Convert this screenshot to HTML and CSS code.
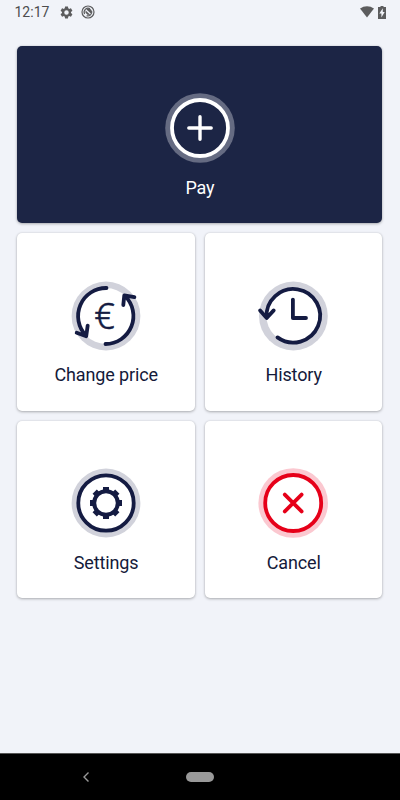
FILE: index.html
```html
<!DOCTYPE html>
<html lang="en">
<head>
<meta charset="utf-8">
<title>Pay</title>
<link rel="stylesheet" href="styles.css">
</head>
<body>
<div class="screen">
  <header class="status">
    <span class="time">12:17</span>
    <svg class="gear" viewBox="0 0 24 24"><path d="M19.14 12.94c.04-.3.06-.61.06-.94s-.02-.64-.07-.94l2.03-1.58c.18-.14.23-.41.12-.61l-1.92-3.32c-.12-.22-.37-.29-.59-.22l-2.39.96c-.5-.38-1.03-.7-1.62-.94l-.36-2.54c-.04-.24-.24-.41-.48-.41h-3.84c-.24 0-.43.17-.47.41l-.36 2.54c-.59.24-1.13.57-1.62.94l-2.39-.96c-.22-.08-.47 0-.59.22L2.74 8.87c-.12.21-.08.47.12.61l2.03 1.58c-.05.3-.09.63-.09.94s.02.64.07.94l-2.03 1.58c-.18.14-.23.41-.12.61l1.92 3.32c.12.22.37.29.59.22l2.39-.96c.5.38 1.03.7 1.62.94l.36 2.54c.05.24.24.41.48.41h3.84c.24 0 .44-.17.47-.41l.36-2.54c.59-.24 1.13-.56 1.62-.94l2.39.96c.22.08.47 0 .59-.22l1.92-3.32c.12-.22.07-.47-.12-.61zM12 15.6a3.6 3.6 0 1 1 0-7.2 3.6 3.6 0 0 1 0 7.2z"/></svg>
    <svg class="target" viewBox="0 0 14 14"><circle class="thin" cx="7" cy="7" r="6"/><path class="thin" d="M3.6 9A4 4 0 0 1 9 3.6M10.7 6A4 4 0 0 1 5.5 10.7"/><path d="M4.6 5.6 9.6 10 6.4 9.8 4.4 7.6zM5.4 4.6a3 3 0 0 1 4.5 4z"/></svg>
    <svg class="wifi" viewBox="0 0 14 12"><path d="M0 2.6C4-.7 10-.7 14 2.6L7 11.5z"/></svg>
    <svg class="battery" viewBox="0 0 8 13"><path d="M2.5 0h3v1H8v12H0V1h2.5z"/><path class="bolt" d="M4.8 2.2 1.3 7.4h2.1v4.2l3.3-5.5H4.8z"/></svg>
  </header>
  <main class="grid">
    <section class="card pay">
      <svg class="icon" viewBox="-36 -36 72 72"><circle class="halo" r="34.8"/><circle class="disc" r="28"/><circle class="line" r="28"/><path class="line plus" d="M0-11.2V11.2M-11.2 0H11.2"/></svg>
      <span>Pay</span>
    </section>
    <section class="card">
      <svg class="icon" viewBox="-36 -36 72 72"><circle class="halo" r="34.4"/><circle class="disc" r="28"/><path class="line" d="M.5-28A28 28 0 0 0-20 19.5M-29.3 16.8-19.8 20.2-18.3 9.6M-.5 28A28 28 0 0 0 19-20M17.3-11 18.3-20.7 28.4-18.9"/><text class="euro" x="-1.6" y="12.6">€</text></svg>
      <span>Change price</span>
    </section>
    <section class="card">
      <svg class="icon" viewBox="-35.4 -36 72 72"><circle class="halo" r="34.4"/><circle class="disc" r="27"/><path class="line" d="M-15.9 21.4A26.8 26.8 0 1 0-26.8 1.8M-33.3-5.6-26.7 2-19.7-5.6M-.5-16.4V2H12.6"/></svg>
      <span>History</span>
    </section>
    <section class="card">
      <svg class="icon" viewBox="-36 -36 72 72"><circle class="halo" r="34.4"/><circle class="disc" r="28"/><circle class="line" r="27.7"/><circle class="cog" r="11.8"/>
        <g class="teeth"><path id="tooth" d="M-3-16H3V-11H-3z"/><use href="#tooth" transform="rotate(45)"/><use href="#tooth" transform="rotate(90)"/><use href="#tooth" transform="rotate(135)"/><use href="#tooth" transform="rotate(180)"/><use href="#tooth" transform="rotate(225)"/><use href="#tooth" transform="rotate(270)"/><use href="#tooth" transform="rotate(315)"/></g></svg>
      <span>Settings</span>
    </section>
    <section class="card cancel">
      <svg class="icon" viewBox="-35.2 -36 72 72"><circle class="halo" r="34.8"/><circle class="disc" r="28"/><circle class="line" r="28"/><path class="line" d="M-8.4-8.4 8.4 8.4M8.4-8.4-8.4 8.4"/></svg>
      <span>Cancel</span>
    </section>
  </main>
  <nav class="navbar">
    <svg class="back" viewBox="0 0 8 12"><path d="M6.5 1.5 2 6l4.5 4.5"/></svg>
    <i class="home"></i>
    <i class="spacer"></i>
  </nav>
</div>
</body>
</html>
```
FILE: styles.css
```css
* { box-sizing: border-box; }
body { margin: 0; background: #f1f3f9; font-family: Roboto, sans-serif; }
.screen { width: 400px; height: 800px; display: flex; flex-direction: column; overflow: hidden; }
svg { display: block; overflow: visible; }
.status { height: 24px; padding: 0 14px 0 14.5px; display: flex; align-items: center; fill: #5c5c5e; }
.time { width: 44.5px; font-size: 14px; line-height: 24px; color: #4c4c4e; white-space: nowrap; }
.gear { width: 15px; height: 15px; }
.target { width: 14px; height: 14px; margin-left: 7px; }
.thin { fill: none; stroke: #5c5c5e; stroke-width: 1.2; }
.wifi { width: 14px; height: 12px; margin-left: auto; }
.battery { width: 8px; height: 13px; margin-left: 4px; }
.bolt { fill: #f1f3f9; }
.grid {
  flex: 1;
  padding: 21.5px 17.6px 0 17.4px;
  display: grid;
  grid-template-columns: 1fr 1fr;
  grid-auto-rows: 177.5px;
  align-content: start;
  gap: 10px;
}
.card {
  display: flex;
  flex-direction: column;
  align-items: center;
  padding-top: 46.5px;
  border-radius: 5px;
  background: #fff;
  box-shadow: 0 1px 3px rgba(0, 0, 0, .28), 0 0 2px rgba(0, 0, 0, .1);
  color: #141a3a;
  --ink: #141b42;
  --halo: #d1d2db;
  --inner: #fff;
}
.card span { margin-top: 11.6px; font-size: 18px; line-height: 24px; letter-spacing: -.13px; }
.pay {
  grid-column: span 2;
  background: #1c2545;
  color: #fff;
  --ink: #fff;
  --halo: #656b82;
  --inner: #1c2545;
}
.cancel { --ink: #e60019; --halo: #fbc8d0; }
.icon { width: 72px; height: 72px; }
.halo { fill: var(--halo); }
.disc { fill: var(--inner); }
.line { fill: none; stroke: var(--ink); stroke-width: 3.8; stroke-linecap: round; stroke-linejoin: round; }
.plus { stroke-width: 3.4; }
.euro { font-family: "Noto Sans", sans-serif; font-size: 36px; font-weight: 300; text-anchor: middle; fill: var(--ink); stroke: var(--ink); stroke-width: .5; }
.cog { fill: none; stroke: var(--ink); stroke-width: 4; }
.teeth { fill: var(--ink); }
.navbar {
  height: 47px;
  padding: 0 80px;
  display: flex;
  align-items: center;
  justify-content: space-between;
  background: #000;
  border-top: 1px solid #555;
}
.back { width: 12px; height: 12px; fill: none; stroke: #999; stroke-width: 1.4; }
.home { width: 28px; height: 10px; border-radius: 5px; background: #999; }
.spacer { width: 12px; }
```
